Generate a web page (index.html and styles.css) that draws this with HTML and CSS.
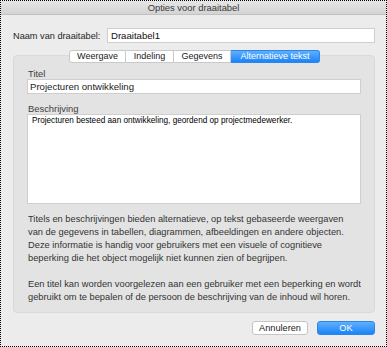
FILE: index.html
```html
<!DOCTYPE html>
<html>
<head>
<meta charset="utf-8">
<link rel="stylesheet" href="styles.css">
</head>
<body>
<div class="window">
  <div class="titlebar">Opties voor draaitabel</div>
  <div class="content">
    <div class="name-row">
      <span class="name-label">Naam van draaitabel:</span>
      <div class="field name-field">Draaitabel1</div>
    </div>
    <div class="tabs">
      <div class="tab">Weergave</div>
      <div class="tab">Indeling</div>
      <div class="tab">Gegevens</div>
      <div class="tab active">Alternatieve tekst</div>
    </div>
    <div class="box">
      <div class="label">Titel</div>
      <div class="field title-field">Projecturen ontwikkeling</div>
      <div class="label desc-label">Beschrijving</div>
      <div class="field textarea">Projecturen besteed aan ontwikkeling, geordend op projectmedewerker.</div>
      <p class="info">Titels en beschrijvingen bieden alternatieve, op tekst gebaseerde weergaven<br>van de gegevens in tabellen, diagrammen, afbeeldingen en andere objecten.<br>Deze informatie is handig voor gebruikers met een visuele of cognitieve<br>beperking die het object mogelijk niet kunnen zien of begrijpen.</p>
      <p class="info">Een titel kan worden voorgelezen aan een gebruiker met een beperking en wordt<br>gebruikt om te bepalen of de persoon de beschrijving van de inhoud wil horen.</p>
    </div>
    <div class="buttons">
      <div class="btn">Annuleren</div>
      <div class="btn primary">OK</div>
    </div>
  </div>
</div>
</body>
</html>
```

FILE: styles.css
```css
html, body {
  margin: 0;
  padding: 0;
}
body {
  width: 387px;
  height: 347px;
  font-family: "Liberation Sans", Arial, sans-serif;
  font-size: 9.2px;
  color: #1e1e1e;
}
.window {
  box-sizing: border-box;
  width: 387px;
  height: 347px;
  border: 1px dotted #000;
  background: #ececec;
  display: flex;
  flex-direction: column;
}
.titlebar {
  height: 13px;
  line-height: 13px;
  text-align: center;
  color: #3a3a3a;
  font-size: 9.4px;
  background: linear-gradient(#e6e6e6, #d3d3d3);
  border-bottom: 1px solid #c2c2c2;
}
.content {
  padding: 0 11px 0 12px;
  display: flex;
  flex-direction: column;
}
.name-row {
  margin-top: 13px;
  display: flex;
  align-items: center;
  height: 15px;
}
.name-label {
  width: 94px;
}
.field {
  box-sizing: border-box;
  background: #fff;
  border: 1px solid #cfcfcf;
  color: #111;
}
.name-field {
  flex: 1;
  height: 15px;
  line-height: 13px;
  padding-left: 3px;
  font-size: 9.6px;
}
.tabs {
  margin-top: 7px;
  align-self: center;
  display: flex;
  height: 13px;
  margin-bottom: -8px;
  position: relative;
  z-index: 1;
  margin-left: 1px;
}
.tab {
  box-sizing: border-box;
  height: 13px;
  line-height: 11px;
  background: #fff;
  border: 1px solid #c9c9c9;
  border-left: none;
  text-align: center;
  color: #1a1a1a;
  font-size: 9px;
}
.tab:nth-child(1) { width: 57px; border-left: 1px solid #c9c9c9; border-radius: 3px 0 0 3px; }
.tab:nth-child(2) { width: 48px; }
.tab:nth-child(3) { width: 57px; }
.tab.active {
  width: 89px;
  background: linear-gradient(#5fb0fb, #1b83f8);
  border-color: #2b86ee;
  color: #fff;
  border-radius: 0 3px 3px 0;
}
.box {
  box-sizing: border-box;
  height: 258px;
  background: #e3e3e3;
  border: 1px solid #d9d9d9;
  border-radius: 4px;
  padding: 12px 13px 0 13px;
  display: flex;
  flex-direction: column;
}
.label {
  color: #3d3d3d;
  font-size: 9.4px;
  height: 11px;
  line-height: 11px;
  padding-left: 1px;
}
.title-field {
  height: 15px;
  line-height: 13px;
  padding-left: 2px;
  font-size: 9.6px;
  color: #222;
}
.desc-label {
  margin-top: 9px;
}
.textarea {
  height: 90px;
  padding: 1px 4px;
  font-size: 8.2px;
  line-height: 10px;
  color: #000;
}
.info {
  margin: 9px 0 0 1px;
  font-size: 9.3px;
  line-height: 13px;
  color: #333;
  white-space: nowrap;
}
.info + .info {
  margin-top: 13px;
}
.buttons {
  margin-top: 8px;
  display: flex;
  justify-content: flex-end;
  gap: 9px;
}
.btn {
  box-sizing: border-box;
  height: 14px;
  line-height: 12px;
  text-align: center;
  font-size: 9.2px;
  border-radius: 3px;
  width: 56px;
  background: #fff;
  border: 1px solid #c6c6c6;
  color: #1a1a1a;
}
.btn.primary {
  width: 58px;
  background: linear-gradient(#5fb0fb, #1b83f8);
  border-color: #2b86ee;
  color: #fff;
}
```
